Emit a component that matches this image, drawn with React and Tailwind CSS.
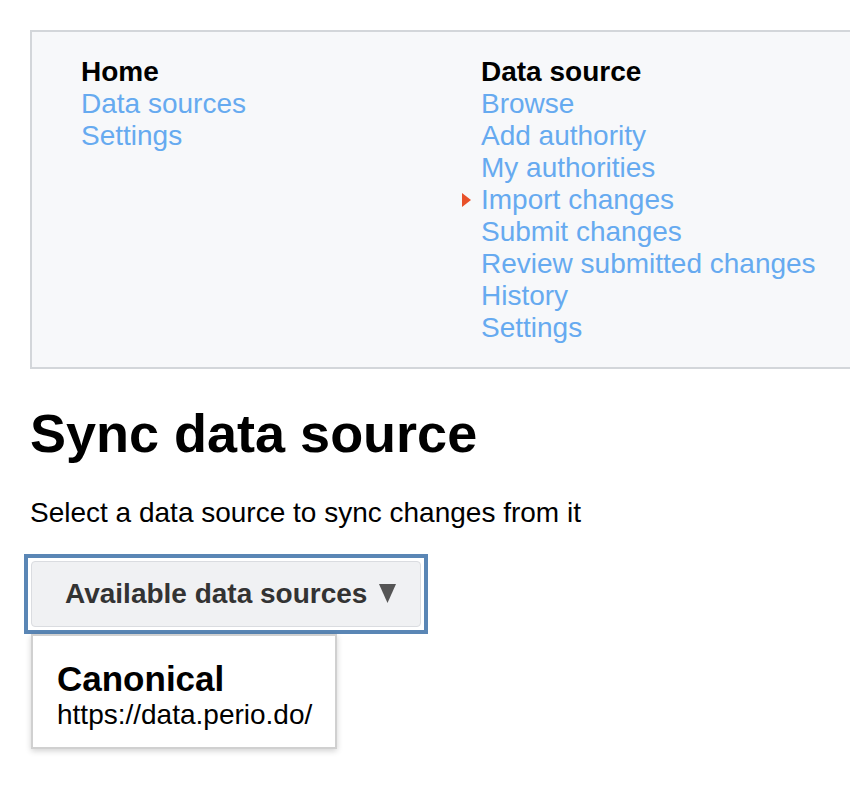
const navCols = [
  {
    title: 'Home',
    links: ['Data sources', 'Settings'],
  },
  {
    title: 'Data source',
    links: [
      'Browse',
      'Add authority',
      'My authorities',
      'Import changes',
      'Submit changes',
      'Review submitted changes',
      'History',
      'Settings',
    ],
  },
];

const active = 'Import changes';

const NavColumn = ({ title, links }) => (
  <div className="w-[400px] shrink-0">
    <div className="font-bold text-black">{title}</div>
    <ul>
      {links.map(link => (
        <li key={link} className="relative">
          {link === active && (
            <span className="absolute left-[-19px] top-[9px] w-0 h-0 border-y-[7px] border-y-transparent border-l-[9px] border-l-[#e8512a]" />
          )}
          <a href="#" className="text-[#66aaf0]">{link}</a>
        </li>
      ))}
    </ul>
  </div>
);

const App = () => {
  return (
    <div
      className="w-full min-h-[790px] overflow-hidden bg-white text-black text-[28px] leading-[32px]"
      style={{ fontFamily: '"Liberation Sans", Arial, sans-serif' }}
    >
      <div className="pt-[30px] pl-[30px]">
        <nav className="w-[900px] bg-[#f7f8fa] border-2 border-[#d3d6da] pl-[49px] pt-[24px] pb-[23px] flex">
          {navCols.map(col => (
            <NavColumn key={col.title} {...col} />
          ))}
        </nav>

        <h1 className="mt-[32px] text-[54px] leading-[64px] font-bold">Sync data source</h1>

        <p className="mt-[32px]">Select a data source to sync changes from it</p>

        <div className="mt-[25px] ml-[-6px]">
          {/* focus ring around the open dropdown */}
          <div className="w-fit border-4 border-[#5a86b5] p-[3px]">
            <button
              type="button"
              className="w-[390px] h-[66px] flex items-center bg-[#f0f1f3] border border-[#dadce0] rounded-[4px] pl-[33px] gap-[12px] font-bold text-[#333]"
            >
              <span>Available data sources</span>
              <svg width="17" height="19" viewBox="0 0 17 19" className="mt-[-2px]">
                <polygon points="0,0 17,0 8.5,19" fill="#555" />
              </svg>
            </button>
          </div>

          <div className="ml-[7px] w-[306px] bg-white border-2 border-[#d0d0d0] shadow-[0_2px_6px_rgba(0,0,0,0.18)] pl-[24px] pt-[23px] pb-[16px]">
            <div className="font-bold text-[35px] leading-[40px]">Canonical</div>
            <div>https://data.perio.do/</div>
          </div>
        </div>
      </div>
    </div>
  );
};

export default App;
